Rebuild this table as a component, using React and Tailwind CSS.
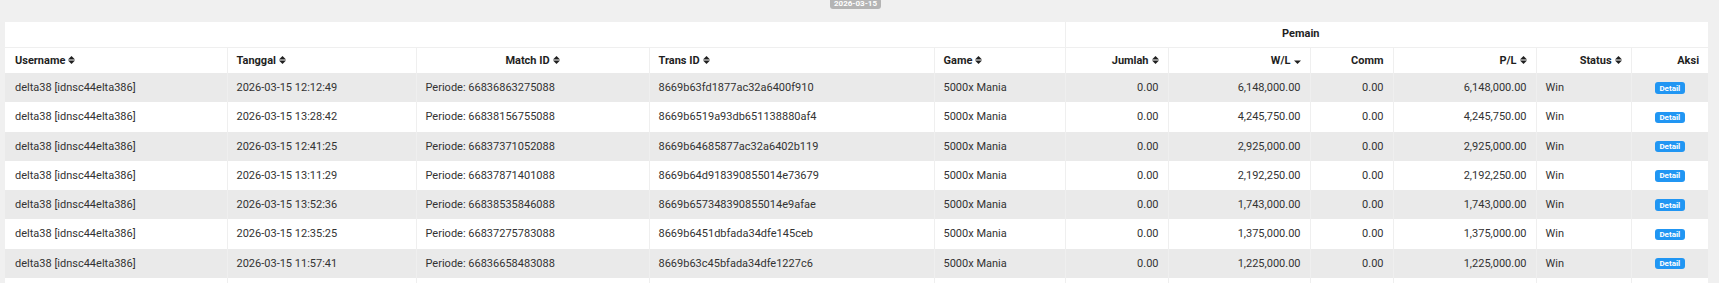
import React from "react";

const ROWS = [
  ["2026-03-15 12:12:49", "66836863275088", "8669b63fd1877ac32a6400f910", "6,148,000.00"],
  ["2026-03-15 13:28:42", "66838156755088", "8669b6519a93db651138880af4", "4,245,750.00"],
  ["2026-03-15 12:41:25", "66837371052088", "8669b64685877ac32a6402b119", "2,925,000.00"],
  ["2026-03-15 13:11:29", "66837871401088", "8669b64d918390855014e73679", "2,192,250.00"],
  ["2026-03-15 13:52:36", "66838535846088", "8669b657348390855014e9afae", "1,743,000.00"],
  ["2026-03-15 12:35:25", "66837275783088", "8669b6451dbfada34dfe145ceb", "1,375,000.00"],
  ["2026-03-15 11:57:41", "66836658483088", "8669b63c45bfada34dfe1227c6", "1,225,000.00"],
];

const COLS = [222, 189, 233, 285, 131, 103, 142, 83, 143, 95, 77];

function SortIcon({ down = false }) {
  return (
    <svg
      viewBox="0 0 7 8"
      className="ml-[3px] inline-block h-[8px] w-[7px] align-[-0px]"
      fill="currentColor"
    >
      {!down && <polygon points="0,3.4 3.5,0 7,3.4" />}
      <polygon points="0,4.6 3.5,8 7,4.6" />
    </svg>
  );
}

function Th({ children, align = "left", first = false, sort = true, down = false }) {
  const alignCls =
    align === "right" ? "text-right" : align === "center" ? "text-center" : "text-left";
  return (
    <th
      className={`${alignCls} ${
        first ? "pl-[10px] pr-[9px]" : "border-l border-[#efefef] px-[9px]"
      } align-middle text-[11px] font-bold leading-[13px] whitespace-nowrap text-[#1f1f1f]`}
    >
      {children}
      {sort && <SortIcon down={down} />}
    </th>
  );
}

function Td({ children, align = "left", first = false }) {
  const alignCls =
    align === "right" ? "text-right" : align === "center" ? "text-center" : "text-left";
  return (
    <td
      className={`${alignCls} ${
        first ? "pl-[10px] pr-[9px]" : "border-l border-[#efefef] px-[9px]"
      } align-middle text-[11px] leading-[13px] whitespace-nowrap text-[#333]`}
    >
      {children}
    </td>
  );
}

export default function App() {
  return (
    <div className="relative min-h-[283px] w-full overflow-hidden bg-[#f0f0f0] font-[Roboto,'Liberation_Sans',sans-serif]">
      <div className="absolute left-[830px] top-[-2px] flex h-[11px] w-[51px] items-center justify-center rounded-[3px] bg-[#b4b4b4] text-[8px] font-bold leading-[9px] text-white">
        2026-03-15
      </div>

      <div className="pl-[5px] pt-[22px]">
        <table className="w-[1703px] table-fixed border-collapse bg-white">
          <colgroup>
            {COLS.map((w, i) => (
              <col key={i} style={{ width: w }} />
            ))}
          </colgroup>
          <thead>
            <tr className="h-[25px] border-b border-[#efefef]">
              <th colSpan={5} />
              <th
                colSpan={4}
                className="border-l border-[#efefef] pb-[2px] text-center align-middle text-[11px] font-bold leading-[13px] text-[#1f1f1f]"
              >
                Pemain
              </th>
              <th colSpan={2} />
            </tr>
            <tr className="h-[26px]">
              <Th first>Username</Th>
              <Th>Tanggal</Th>
              <Th align="center">Match ID</Th>
              <Th>Trans ID</Th>
              <Th>Game</Th>
              <Th align="right">Jumlah</Th>
              <Th align="right" down>
                W/L
              </Th>
              <Th align="right" sort={false}>
                Comm
              </Th>
              <Th align="right">P/L</Th>
              <Th align="right">Status</Th>
              <Th align="right" sort={false}>
                Aksi
              </Th>
            </tr>
          </thead>
          <tbody>
            {ROWS.map(([date, match, trans, amount], i) => (
              <tr
                key={trans}
                className={`h-[29.25px] ${i % 2 === 0 ? "bg-[#eaeaea]" : "bg-white"}`}
              >
                <Td first>delta38 [idnsc44elta386]</Td>
                <Td>{date}</Td>
                <Td>Periode: {match}</Td>
                <Td>{trans}</Td>
                <Td>5000x Mania</Td>
                <Td align="right">0.00</Td>
                <Td align="right">{amount}</Td>
                <Td align="right">0.00</Td>
                <Td align="right">{amount}</Td>
                <Td>Win</Td>
                <Td align="center">
                  <span className="inline-flex h-[11.5px] w-[30px] items-center justify-center rounded-[3px] bg-[#2196f3] align-middle text-[8px] font-bold leading-[9px] text-white">
                    Detail
                  </span>
                </Td>
              </tr>
            ))}
            <tr className="h-[29.25px] bg-white">
              {COLS.map((_, i) => (
                <Td key={i} first={i === 0}>
                  {"\u00a0"}
                </Td>
              ))}
            </tr>
          </tbody>
        </table>
      </div>
    </div>
  );
}
